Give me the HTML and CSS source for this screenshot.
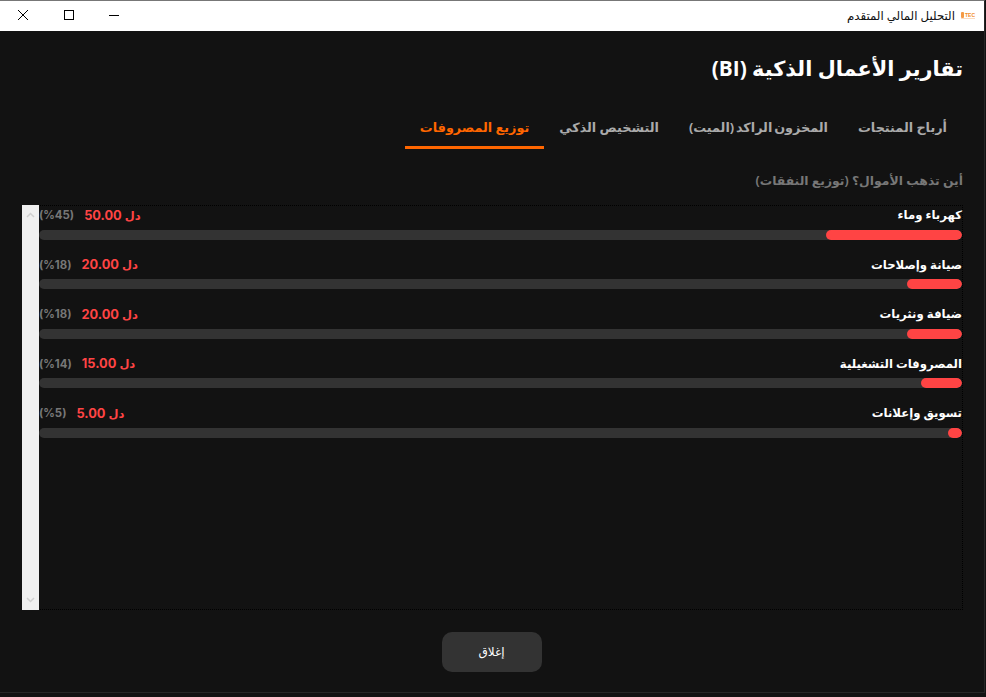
FILE: index.html
```html
<!DOCTYPE html>
<html lang="ar">
	<head>
		<meta charset="UTF-8">
		<title>التحليل المالي المتقدم</title>
		<link rel="stylesheet" href="styles.css">
	</head>
	<body>
		<div class="win">
			<div class="titlebar">
				<div class="controls">
					<svg class="ctl" viewBox="0 0 10 10"><path d="M0 0L10 10M10 0L0 10"/></svg>
					<svg class="ctl" viewBox="0 0 10 10"><rect x="0.5" y="0.5" width="9" height="9"/></svg>
					<svg class="ctl" viewBox="0 0 10 10"><path d="M0 5.5H10"/></svg>
				</div>
				<div class="wintitle">
					<span>التحليل المالي المتقدم</span>
					<span class="logo">TEC</span>
				</div>
			</div>
			<div class="main" dir="rtl">
				<h1>تقارير الأعمال الذكية (BI)</h1>
				<ul class="tabs">
					<li>أرباح المنتجات</li>
					<li>المخزون الراكد (الميت)</li>
					<li>التشخيص الذكي</li>
					<li class="ac">توزيع المصروفات</li>
				</ul>
				<h2>أين تذهب الأموال؟ (توزيع النفقات)</h2>
				<div class="box">
					<div class="rows">
						<div class="row">
							<div class="rowhead">
								<span class="name">كهرباء وماء</span>
								<span class="amount"><span class="cur">دل</span> 50.00</span>
								<span class="pct">(%45)</span>
							</div>
							<div class="track"><div class="fill" style="width: 136px"></div></div>
						</div>
						<div class="row">
							<div class="rowhead">
								<span class="name">صيانة وإصلاحات</span>
								<span class="amount"><span class="cur">دل</span> 20.00</span>
								<span class="pct">(%18)</span>
							</div>
							<div class="track"><div class="fill" style="width: 55px"></div></div>
						</div>
						<div class="row">
							<div class="rowhead">
								<span class="name">ضيافة ونثريات</span>
								<span class="amount"><span class="cur">دل</span> 20.00</span>
								<span class="pct">(%18)</span>
							</div>
							<div class="track"><div class="fill" style="width: 55px"></div></div>
						</div>
						<div class="row">
							<div class="rowhead">
								<span class="name">المصروفات التشغيلية</span>
								<span class="amount"><span class="cur">دل</span> 15.00</span>
								<span class="pct">(%14)</span>
							</div>
							<div class="track"><div class="fill" style="width: 41px"></div></div>
						</div>
						<div class="row">
							<div class="rowhead">
								<span class="name">تسويق وإعلانات</span>
								<span class="amount"><span class="cur">دل</span> 5.00</span>
								<span class="pct">(%5)</span>
							</div>
							<div class="track"><div class="fill" style="width: 14px"></div></div>
						</div>
					</div>
					<div class="scroll">
						<svg viewBox="0 0 9 6"><path d="M1 5L4.5 1.5L8 5"/></svg>
						<svg viewBox="0 0 9 6"><path d="M1 1L4.5 4.5L8 1"/></svg>
					</div>
				</div>
				<div class="foot"><a href="javascript:;" class="close">إغلاق</a></div>
			</div>
		</div>
	</body>
</html>
```

FILE: styles.css
```css
*{
	margin: 0;
	padding: 0;
	box-sizing: border-box;
}
li{
	list-style: none;
}
html,body{
	height: 100%;
}
body{
	background: #121212;
	font-family: "Open Sans", "DejaVu Sans", sans-serif;
	overflow: hidden;
}
.win{
	height: 693px;
	width: 985px;
	display: flex;
	flex-direction: column;
	border-top: 1px solid #777;
	border-right: 1px solid #262626;
	border-bottom: 1px solid #262626;
}
.titlebar{
	height: 30px;
	background: #fff;
	display: flex;
	justify-content: space-between;
	align-items: center;
}
.controls{
	display: flex;
	padding-left: 18px;
	padding-bottom: 2px;
	gap: 35px;
}
.ctl{
	width: 10px;
	height: 10px;
	fill: none;
	stroke: #000;
	stroke-width: 1;
}
.ctl:first-child{
	margin-right: 1px;
}
.wintitle{
	display: flex;
	align-items: center;
	gap: 6px;
	padding-right: 9px;
	padding-bottom: 2px;
	font-size: 11.8px;
	color: #111;
}
.logo{
	width: 14px;
	display: flex;
	align-items: center;
	gap: 1px;
	font-size: 5px;
	font-weight: bold;
	color: #f28c28;
	font-family: "Liberation Sans", sans-serif;
	border-bottom: 1px solid #fbdcc0;
}
.logo::before{
	content: "";
	width: 3px;
	height: 6px;
	background: #f59a45;
	border-radius: 1px;
}
.main{
	flex: 1;
	padding: 0 21px 0 22px;
	display: flex;
	flex-direction: column;
}
h1{
	font-size: 20.8px;
	line-height: 30px;
	margin-top: 22px;
	color: #fff;
}
.tabs{
	display: flex;
	margin-top: 20px;
	margin-right: 1px;
}
.tabs li{
	padding: 6px 15px 0;
	height: 46px;
	line-height: 37px;
	font-size: 12.8px;
	font-weight: bold;
	color: #aaa;
	border-bottom: 3px solid transparent;
}
.tabs li:nth-child(2){
	word-spacing: -1.5px;
}
.tabs .ac{
	color: #ff6600;
	border-bottom-color: #ff6600;
}
h2{
	font-size: 12.4px;
	line-height: 18px;
	margin-top: 23px;
	color: #777;
}
.box{
	margin-top: 15px;
	height: 405px;
	border: 1px dotted #000;
	border-left: 0;
	display: flex;
}
.rows{
	flex: 1;
}
.row{
	height: 49.5px;
}
.rowhead{
	display: flex;
	align-items: center;
	height: 18px;
	font-family: Inter, "DejaVu Sans", sans-serif;
	font-size: 12.8px;
	font-weight: bold;
}
.name{
	flex: 1;
	padding-bottom: 2px;
	font-family: "Open Sans", "DejaVu Sans", sans-serif;
	font-size: 11.7px;
	color: #fff;
}
.amount{
	color: #ff4444;
	margin-left: 10px;
}
.cur{
	font-size: 11.5px;
}
.pct{
	color: #777;
	font-size: 11.4px;
}
.track{
	height: 10px;
	margin-top: 5.75px;
	background: #333;
	border-radius: 5px;
	overflow: hidden;
}
.fill{
	height: 10px;
	background: #ff4444;
	border-radius: 5px;
}
.scroll{
	width: 17px;
	margin: -1px 0;
	background: #f0f0f0;
	display: flex;
	flex-direction: column;
	justify-content: space-between;
	align-items: center;
	padding: 7px 0;
}
.scroll svg{
	width: 9px;
	height: 6px;
	fill: none;
	stroke: #d0d0d0;
	stroke-width: 1.5;
}
.foot{
	display: flex;
	justify-content: center;
	margin-top: 22px;
	padding-right: 2px;
}
.close{
	width: 100px;
	height: 40px;
	line-height: 40px;
	text-align: center;
	background: #333;
	border-radius: 10px;
	color: #fff;
	font-size: 12px;
	text-decoration: none;
}
```
